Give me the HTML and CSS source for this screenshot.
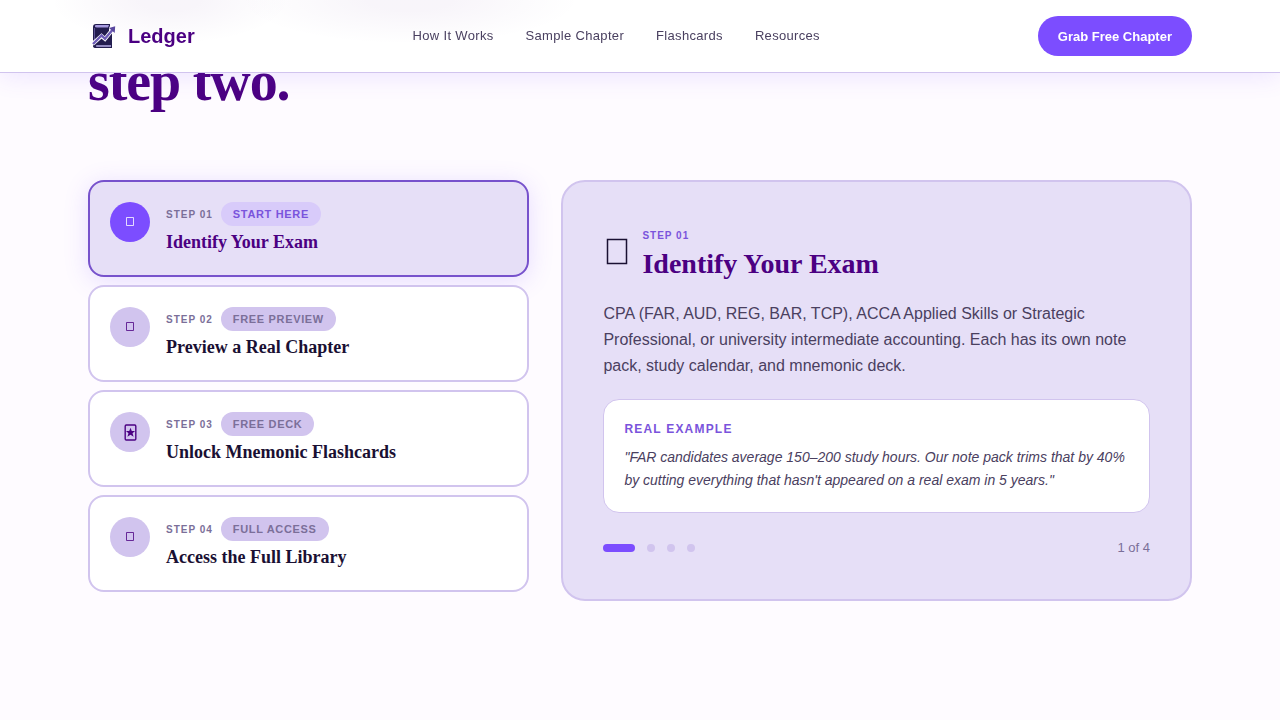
FILE: index.html
```html
<!DOCTYPE html>
<html lang="en">
<head>
    <meta charset="UTF-8">
    <meta name="viewport" content="width=device-width, initial-scale=1.0">
    <title>Ledger</title>
    <link rel="stylesheet" href="styles.css">
</head>
<body>
    <header class="navbar">
        <div class="container nav-inner">
            <a href="#" class="logo">
                <svg class="logo-mark" viewBox="0 0 32 32" aria-hidden="true">
                    <path d="M8 4h14v2l-1 2v3h3v13H8l-3 1.500V7q0-3 3-3z" fill="#231d4f"/>
                    <path d="M8 5h13l-1 2.500H9q-2 0-2-1.200T8 5z" fill="#a79be0"/>
                    <path d="M6.500 8v13.500" stroke="#6c63a8" stroke-width=".8"/>
                    <path d="M8 24h16v4H8q-3 0-3-2t3-2z" fill="#231d4f"/>
                    <path d="M8.500 25.200H23v1.500H8.500q-1.500-.7 0-1.500z" fill="#b7aee6"/>
                    <path d="M4.500 24l9-8 3.500 3 8-10" fill="none" stroke="#fff" stroke-width="4"/>
                    <path d="M5 24l8.500-8.500L17 18.800l8-9.500" fill="none" stroke="#6c5bb5" stroke-width="2.400"/>
                    <path d="M27.200 6.300l-.5 6.700-5.700-5z" fill="#5a489f"/>
                </svg>
                <span>Ledger</span>
            </a>
            <nav class="nav-links">
                <a href="#how">How It Works</a>
                <a href="#sample">Sample Chapter</a>
                <a href="#flashcards">Flashcards</a>
                <a href="#resources">Resources</a>
            </nav>
            <button type="button" class="btn">Grab Free Chapter</button>
        </div>
    </header>

    <main class="container section" id="how">
        <h2 class="section-title">step two.</h2>
        <div class="steps-grid">
            <div class="steps">
                <button type="button" class="step active">
                    <span class="step-icon"><svg class="box" viewBox="0 0 10 12"><path d="M1.500 1.500h7v8h-7z"/></svg></span>
                    <span class="step-body">
                        <span class="step-meta"><span class="step-num">STEP 01</span><span class="tag">START HERE</span></span>
                        <span class="step-name">Identify Your Exam</span>
                    </span>
                </button>
                <button type="button" class="step">
                    <span class="step-icon"><svg class="box" viewBox="0 0 10 12"><path d="M1.500 1.500h7v8h-7z"/></svg></span>
                    <span class="step-body">
                        <span class="step-meta"><span class="step-num">STEP 02</span><span class="tag">FREE PREVIEW</span></span>
                        <span class="step-name">Preview a Real Chapter</span>
                    </span>
                </button>
                <button type="button" class="step">
                    <span class="step-icon">
                        <svg class="card" viewBox="0 0 12 16">
                            <rect x="1" y="1" width="10" height="14" rx="1"/>
                            <path d="M6 3.500l1.200 3.100h3.100L7.900 8.700l1 3.200L6 10l-2.900 1.900 1-3.200-2.400-2.100h3.100z"/>
                        </svg>
                    </span>
                    <span class="step-body">
                        <span class="step-meta"><span class="step-num">STEP 03</span><span class="tag">FREE DECK</span></span>
                        <span class="step-name">Unlock Mnemonic Flashcards</span>
                    </span>
                </button>
                <button type="button" class="step">
                    <span class="step-icon"><svg class="box" viewBox="0 0 10 12"><path d="M1.500 1.500h7v8h-7z"/></svg></span>
                    <span class="step-body">
                        <span class="step-meta"><span class="step-num">STEP 04</span><span class="tag">FULL ACCESS</span></span>
                        <span class="step-name">Access the Full Library</span>
                    </span>
                </button>
            </div>

            <article class="detail">
                <div class="detail-head">
                    <svg class="detail-icon" viewBox="0 0 27 40" aria-hidden="true"><path d="M4.500 3.500h19v24h-19z"/></svg>
                    <div>
                        <div class="detail-num">STEP 01</div>
                        <h3 class="detail-title">Identify Your Exam</h3>
                    </div>
                </div>
                <p class="detail-text">CPA (FAR, AUD, REG, BAR, TCP), ACCA Applied Skills or Strategic Professional, or university intermediate accounting. Each has its own note pack, study calendar, and mnemonic deck.</p>
                <div class="example">
                    <div class="example-label">REAL EXAMPLE</div>
                    <p class="example-text">"FAR candidates average 150–200 study hours. Our note pack trims that by 40% by cutting everything that hasn't appeared on a real exam in 5 years."</p>
                </div>
                <div class="progress">
                    <div class="dots">
                        <span class="dot current"></span>
                        <span class="dot"></span>
                        <span class="dot"></span>
                        <span class="dot"></span>
                    </div>
                    <span class="count">1 of 4</span>
                </div>
            </article>
        </div>
    </main>
</body>
</html>
```

FILE: styles.css
```css
* {
    box-sizing: border-box;
}
body {
    margin: 0;
    font-family: "Liberation Sans", Arial, sans-serif;
    font-size: 16px;
    line-height: 1.6;
    color: #1a1033;
    background-color: #fefbff;
}
h2, h3, p {
    margin: 0;
}
a {
    color: inherit;
    text-decoration: none;
}
button {
    font-family: inherit;
    cursor: pointer;
}
.container {
    max-width: 1200px;
    margin: 0 auto;
    padding: 0 48px;
}

/* Navbar */
.navbar {
    position: fixed;
    top: 0;
    left: 0;
    right: 0;
    z-index: 10;
    background-color: #fff;
    background-image:
        radial-gradient(ellipse 120px 44px at 170px 0, rgba(75, 0, 130, 0.04) 25%, transparent),
        radial-gradient(ellipse 170px 44px at 410px 0, rgba(75, 0, 130, 0.04) 25%, transparent);
    border-bottom: 1px solid #d1c4ee;
    box-shadow: 0 4px 24px rgba(124, 77, 255, 0.12);
}
.nav-inner {
    display: flex;
    align-items: center;
    justify-content: space-between;
    height: 72px;
}
.logo {
    display: flex;
    align-items: center;
    gap: 8px;
    font-size: 20px;
    font-weight: bold;
    color: #4b0082;
}
.logo-mark {
    width: 32px;
    height: 32px;
}
.nav-links {
    display: flex;
    gap: 32px;
    font-size: 13px;
    letter-spacing: 0.025em;
    color: #4a4060;
}
.btn {
    height: 40px;
    padding: 0 20px;
    border: none;
    border-radius: 20px;
    background-color: #7c4dff;
    color: #fff;
    font-size: 13px;
    font-weight: bold;
}

/* Steps */
.section {
    padding-top: 48px;
    padding-bottom: 120px;
}
.section-title {
    margin-bottom: 66px;
    font-family: "Liberation Serif", "Times New Roman", serif;
    font-size: 56px;
    line-height: 66px;
    letter-spacing: -0.02em;
    color: #4b0082;
}
.steps-grid {
    display: grid;
    grid-template-columns: 7fr 10fr;
    gap: 32px;
    align-items: start;
}
.steps {
    display: flex;
    flex-direction: column;
    gap: 8px;
}
.step {
    display: flex;
    align-items: flex-start;
    gap: 16px;
    padding: 20px;
    border: 2px solid #d1c4ee;
    border-radius: 16px;
    background-color: #fff;
    color: #1a1033;
    text-align: left;
}
.step-icon {
    display: flex;
    flex: none;
    align-items: center;
    justify-content: center;
    width: 40px;
    height: 40px;
    border-radius: 50%;
    background-color: #d1c4ee;
    color: #4b0082;
}
.box {
    width: 10px;
    height: 12px;
    fill: none;
    stroke: currentColor;
    stroke-width: 0.8;
}
.card {
    width: 13px;
    height: 17px;
    fill: currentColor;
}
.card rect {
    fill: none;
    stroke: currentColor;
    stroke-width: 1.3;
}
.step-meta {
    display: flex;
    align-items: center;
    gap: 8px;
}
.step-num {
    font-size: 10px;
    font-weight: bold;
    letter-spacing: 0.1em;
    color: #7b6f99;
}
.tag {
    padding: 4px 12px;
    border-radius: 16px;
    background-color: #d1c4ee;
    color: #7b6f99;
    font-size: 11px;
    font-weight: bold;
    line-height: 16px;
    letter-spacing: 0.06em;
}
.step-name {
    display: block;
    margin-top: 4px;
    font-family: "Liberation Serif", "Times New Roman", serif;
    font-size: 18px;
    font-weight: bold;
    line-height: 25px;
}
.step.active {
    border-color: #7752cc;
    background-color: #e6dff7;
    box-shadow: 0 4px 24px rgba(124, 77, 255, 0.18);
}
.active .step-icon {
    background-color: #7c4dff;
    color: #fff;
}
.active .tag {
    background-color: #d8cbfa;
    color: #7a54dc;
}
.active .step-name {
    color: #4b0082;
}

/* Detail panel */
.detail {
    padding: 40px;
    border: 2px solid #d1c4ee;
    border-radius: 24px;
    background-color: #e6dff7;
}
.detail-head {
    display: flex;
    align-items: center;
    gap: 12px;
    margin-bottom: 17px;
    padding-top: 6px;
}
.detail-icon {
    width: 27px;
    height: 40px;
    fill: none;
    stroke: #1a1033;
    stroke-width: 1.5;
}
.detail-num {
    font-size: 10px;
    font-weight: bold;
    letter-spacing: 0.1em;
    color: #7a54dc;
}
.detail-title {
    font-family: "Liberation Serif", "Times New Roman", serif;
    font-size: 28px;
    line-height: 40px;
    color: #4b0082;
}
.detail-text {
    margin-bottom: 20px;
    line-height: 26px;
    color: #4a4060;
}
.example {
    margin-bottom: 24px;
    padding: 20px;
    border: 1px solid #d1c4ee;
    border-radius: 16px;
    background-color: #fff;
}
.example-label {
    margin-bottom: 8px;
    font-size: 12px;
    font-weight: bold;
    line-height: 18px;
    letter-spacing: 0.1em;
    color: #7a54dc;
}
.example-text {
    font-size: 14px;
    font-style: italic;
    line-height: 23px;
    color: #4a4060;
}
.progress {
    display: flex;
    align-items: center;
    justify-content: space-between;
}
.dots {
    display: flex;
    gap: 12px;
}
.dot {
    width: 8px;
    height: 8px;
    border-radius: 4px;
    background-color: #d1c4ee;
}
.dot.current {
    width: 32px;
    background-color: #7c4dff;
}
.count {
    font-size: 13px;
    line-height: 22px;
    color: #7b6f99;
}
```
